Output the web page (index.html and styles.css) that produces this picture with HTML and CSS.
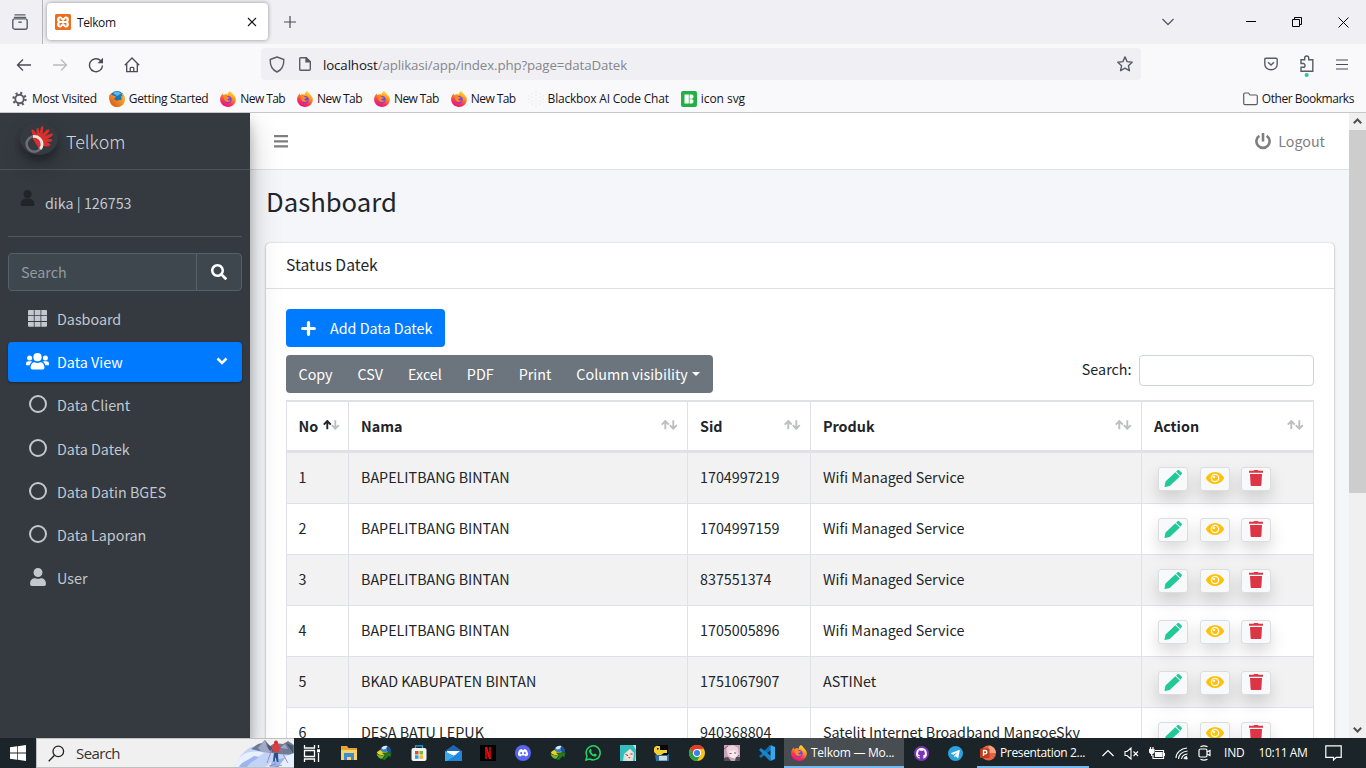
FILE: index.html
```html
<!DOCTYPE html>
<html lang="id">
<head>
<meta charset="utf-8">
<title>Telkom</title>
<link rel="stylesheet" href="styles.css">
</head>
<body>
<svg class="defs" width="0" height="0" aria-hidden="true">
  <defs>
    <linearGradient id="ffg" x1=".8" y1="0" x2=".3" y2="1"><stop offset="0" stop-color="#fff04a"/><stop offset=".35" stop-color="#ff9a1f"/><stop offset=".7" stop-color="#ff3750"/><stop offset="1" stop-color="#eb0a8c"/></linearGradient>
    <linearGradient id="ffo" x1="1" y1="0" x2="0" y2="1"><stop offset="0" stop-color="#ffd33a"/><stop offset=".5" stop-color="#f08a1c"/><stop offset="1" stop-color="#d9481b"/></linearGradient>
  </defs>
  <symbol id="firefox" viewBox="0 0 16 16"><path fill="url(#ffg)" d="M10 0c2 1.500 2.200 2.600 3.300 3.600 1.700 1.500 2.700 3.200 2.500 5.400C15.500 13 12.200 16 8 16S0 12.700.1 8.300C.2 5.800 1.200 4.100 2.600 2.200l.5 2C4.500 3 6.300 3.100 7.800 3.700 7.500 2 8.800.9 10 0z"/><circle cx="8" cy="8.600" r="3.700" fill="#7542e5"/><path fill="#ff8a22" d="M3.400 5.200c1.700-1 3.300-.3 4.600.8l2 .4c-.7 1.300-2.300 1-2.700 2 .6 1.500 2.400 1.400 3.500.7-.8 2.500-5.300 2.600-6.500-.3-.5-1.200-.6-2.400-.9-3.600z"/></symbol>
  <symbol id="oldfox" viewBox="0 0 16 16"><circle cx="8" cy="7.500" r="7.500" fill="#2173b5"/><path fill="#5bbbe8" d="M4 2c3-2 6-1.500 8 .5L8 5z"/><path fill="url(#ffo)" d="M.2 4.500C1 3.500 1.500 3 2 2.500c.3 1 .7 1.500 1.500 1.800L7 5.500 5.200 7.800c.6 2 3.300 2.700 5 1.200l1.800.2c1-1.500.6-3.200-.4-4.500 1 .2 1.600.8 2 1.500-.1-1.700-.5-3-1.500-4.200 2.600 1.400 3.900 4 3.900 6.400 0 4.300-3.600 7.600-8 7.600S-.2 12.500.2 4.500z"/></symbol>
  <symbol id="search" viewBox="0 0 512 512"><path fill="currentColor" d="M505 442.700L405.300 343c-4.500-4.500-10.600-7-17-7H372c27.600-35.300 44-79.700 44-128C416 93.100 322.900 0 208 0S0 93.100 0 208s93.100 208 208 208c48.300 0 92.700-16.400 128-44v16.300c0 6.400 2.500 12.500 7 17l99.700 99.700c9.400 9.400 24.600 9.400 33.900 0l28.300-28.300c9.400-9.400 9.400-24.600.1-34zM208 336c-70.700 0-128-57.200-128-128s57.200-128 128-128 128 57.200 128 128-57.200 128-128 128z"/></symbol>
  <symbol id="user" viewBox="0 0 448 512"><path fill="currentColor" d="M224 256c70.700 0 128-57.300 128-128S294.700 0 224 0 96 57.300 96 128s57.300 128 128 128zm89.600 32h-16.700c-22.200 10.200-46.900 16-72.900 16s-50.600-5.800-72.900-16h-16.700C60.200 288 0 348.200 0 422.400V464c0 26.500 21.500 48 48 48h352c26.500 0 48-21.500 48-48v-41.600c0-74.200-60.200-134.400-134.400-134.400z"/></symbol>
  <symbol id="users" viewBox="0 0 23 17"><g fill="currentColor"><circle cx="11.500" cy="4.200" r="4.100"/><circle cx="3.600" cy="5" r="2.500"/><circle cx="19.400" cy="5" r="2.500"/><path d="M4.600 14.600c0-3.400 1.700-5.300 4-5.300 1.900.9 3.900.9 5.800 0 2.300 0 4 1.900 4 5.300 0 1.200-.6 2-1.700 2H6.300c-1.100 0-1.700-.8-1.700-2z"/><path d="M0 10.600C0 9 1 8.200 2.400 8.200h2.500c.6 0 1 .2 1.400.5-1.600 1-2.400 2-2.600 3.600H.9c-.6 0-.9-.4-.9-.9zM23 10.600c0-1.600-1-2.400-2.400-2.400h-2.500c-.6 0-1 .2-1.400.5 1.600 1 2.400 2 2.600 3.600h2.800c.6 0 .9-.4.9-.9z"/></g></symbol>
  <symbol id="grid" viewBox="0 0 19 17"><path fill="currentColor" d="M1 0h4.800v4.900H0V1a1 1 0 0 1 1-1zM6.600 0h5.900v4.900H6.600zM13.300 0H18a1 1 0 0 1 1 1v3.900h-5.700zM0 5.800h5.800v5.200H0zM6.600 5.800h5.900v5.200H6.600zM13.300 5.800H19v5.200h-5.700zM0 11.900h5.800v4.900H1a1 1 0 0 1-1-1zM6.600 11.900h5.900v4.900H6.600zM13.300 11.900H19v3.900a1 1 0 0 1-1 1h-4.700z"/></symbol>
  <symbol id="ring" viewBox="0 0 18 18"><circle cx="9" cy="9" r="8" fill="none" stroke="currentColor" stroke-width="2"/></symbol>
  <symbol id="sort" viewBox="0 0 17 10"><g fill="none" stroke-width="1.900"><path class="up" d="M4.300 9.300V1M.8 4.600L4.300 1l3.500 3.600"/><path class="down" d="M12.300.3v8.400M8.800 5.100l3.500 3.600 3.500-3.600"/></g></symbol>
  <symbol id="pencil" viewBox="0 0 18 17"><g fill="#20c997"><path d="M11.300 2.200L15.800 6.500 5.700 15.900 1 16.900Q.4 17 .5 16.400L1.500 11.500zM12.100 1.500L13.600.2q.8-.6 1.500 0l2.500 2.400q.7.700 0 1.500L16.500 5.700z"/></g></symbol>
  <symbol id="eye" viewBox="0 0 18 12"><path fill="#ffc107" d="M9 0c3.800 0 7 2.200 8.800 5.300.2.400.2 1 0 1.400C16 9.800 12.800 12 9 12S2 9.800.2 6.700a1.500 1.500 0 0 1 0-1.400C2 2.200 5.200 0 9 0z"/><circle cx="9" cy="6" r="3.700" fill="none" stroke="#f8f9fa" stroke-width="1.300"/><circle cx="7.900" cy="5" r="1.300" fill="#f8f9fa"/></symbol>
  <symbol id="trash" viewBox="0 0 14 16"><path fill="#dc3545" d="M4.500.7L5.200 0h3.600l.7.700H14v2H0v-2zM1 4h12l-.6 10.700c0 .8-.6 1.300-1.400 1.300H3c-.8 0-1.400-.5-1.400-1.300z"/></symbol>
  <symbol id="idm" viewBox="0 0 16 16"><circle cx="9.500" cy="6" r="5.300" fill="#3c7fc4"/><path fill="#d8e9f5" d="M5.500 3c1.500-2 4-2.700 6-2L9.500 4 7 4.500z"/><path fill="#1d4f9a" d="M11 1.500c3 .8 4.500 4 3.700 7L11 6z"/><path fill="#e9d224" d="M4.500 5c2 2.500 4 2.500 7 1.500l-1 3.500C5 11 1.500 9.500.8 7.500 2 6 3.500 5.300 4.500 5z"/><path fill="#6fb92c" d="M.6 8.500c2 2 5 2.200 8 1.800l-2 3.500c-3 .2-5.500-2-6-5.300z"/><path fill="#257a1c" stroke="#123d10" stroke-width=".5" d="M6.500 8l9-.5-1 5-1.900-1.200-3.800 3.900-2.600-.8 2.900-3.900z"/></symbol>
</svg>

<div class="window">
  <header class="tabs">
    <div class="view-btn"><svg width="16" height="16" viewBox="0 0 16 16" fill="none" stroke="#5b5b66" stroke-width="1.400"><path d="M2.500.900h11M1.900 3.400h12.200"/><rect x=".8" y="4.900" width="14.400" height="10.300" rx="2"/><path d="M6.300 8.200h3.500"/></svg></div>
    <div class="tab">
      <svg width="16" height="16" viewBox="0 0 16 16"><rect width="16" height="16" rx="1.500" fill="#ed6d1c"/><path fill="#fff" d="M4.800 2.500c1.400 0 2.200.6 2.600 1.500h1.200c.4-.9 1.200-1.500 2.600-1.500 2.600 0 3.700 3.300 1.800 5.500 1.900 2.200.8 5.500-1.800 5.500-1.400 0-2.200-.6-2.600-1.500H7.400c-.4.900-1.200 1.500-2.600 1.500-2.600 0-3.700-3.300-1.800-5.500-1.900-2.200-.8-5.500 1.800-5.500z"/><path fill="none" stroke="#ed6d1c" stroke-width="1.300" stroke-linecap="round" d="M5.200 5v1.300h1.600M10.800 5v1.300H9.200M5.200 11V9.700h1.600M10.800 11V9.700H9.200"/></svg>
      <span class="tab-title">Telkom</span>
      <svg class="tab-close" width="10" height="10" viewBox="0 0 10 10" stroke="#15141a" stroke-width="1.100"><path d="M1 1l8 8M9 1L1 9"/></svg>
    </div>
    <svg class="tab-new" width="12" height="12" viewBox="0 0 12 12" stroke="#4b4b55" stroke-width="1.200"><path d="M6 0v12M0 6h12"/></svg>
    <div class="win-btns">
      <svg width="14" height="10" viewBox="0 0 14 10" fill="none" stroke="#5b5b66" stroke-width="1.300"><path d="M1.500 2L7 7.500 12.500 2"/></svg>
      <svg width="10" height="10" viewBox="0 0 10 10" stroke="#000" stroke-width="1"><path d="M0 4.500h10"/></svg>
      <svg width="10" height="10" viewBox="0 0 10 10" fill="none" stroke="#000"><path d="M.5 2.500h7v7h-7zM2.500 2.500v-2h7v7h-2"/></svg>
      <svg width="11" height="11" viewBox="0 0 11 11" stroke="#000"><path d="M.5.500l10 10M10.500.500l-10 10"/></svg>
    </div>
  </header>

  <div class="toolbar">
    <div class="nav-btns">
      <svg width="16" height="16" viewBox="0 0 16 16" fill="none" stroke="#4b4b55" stroke-width="1.300"><path d="M15 8H1.500M7 2.500L1.500 8 7 13.500"/></svg>
      <svg width="16" height="16" viewBox="0 0 16 16" fill="none" stroke="#bababf" stroke-width="1.300"><path d="M1 8h13.500M9 2.500L14.500 8 9 13.500"/></svg>
      <svg width="16" height="16" viewBox="0 0 16 16" fill="none" stroke="#4b4b55" stroke-width="1.400"><path d="M14.500 8.500A6.500 6.500 0 1 1 12.800 3.800"/><path d="M15 .8v5.500H9.500z" fill="#4b4b55" stroke="none"/></svg>
      <svg width="16" height="16" viewBox="0 0 16 16" fill="none" stroke="#4b4b55" stroke-width="1.300"><path d="M.8 8.200L8 1l7.200 7.200M2.700 6.700v8h10.600v-8M6.200 14.500v-3.200q0-1 1-1h1.600q1 0 1 1v3.200"/></svg>
    </div>
    <div class="url">
      <svg width="16" height="17" viewBox="0 0 16 17" fill="none" stroke="#5b5b66" stroke-width="1.400"><path d="M8 1L14.800 3.500C15 9.500 12.500 14 8 16 3.500 14 1 9.500 1.200 3.500z" stroke-linejoin="round"/></svg>
      <svg class="doc" width="12" height="14" viewBox="0 0 12 14" fill="none" stroke="#5b5b66" stroke-width="1.400"><path d="M1.700.700h5.500l4.100 4.100v7.500q0 1-1 1H1.700q-1 0-1-1V1.700q0-1 1-1z"/><path fill="#5b5b66" d="M7 .700v4.200h4.200z"/></svg>
      <span class="url-text"><b>localhost</b>/aplikasi/app/index.php?page=dataDatek</span>
      <svg class="star" width="16" height="16" viewBox="0 0 16 16" fill="none" stroke="#5b5b66" stroke-width="1.400" stroke-linejoin="round"><path d="M8 .9l2.100 4.700 5.100.6-3.800 3.500 1 5L8 12.200l-4.400 2.500 1-5L.8 6.200l5.100-.6z"/></svg>
    </div>
    <div class="tool-btns">
      <svg width="14" height="14" viewBox="0 0 14 14" fill="none" stroke="#5b5b66" stroke-width="1.400"><path d="M2 1.200h10q1.200 0 1.200 1.200V7c0 3.500-2.800 5.700-6.200 5.700S.8 10.500.8 7V2.400Q.8 1.200 2 1.200z"/><path d="M4 5.200l3 2.900 3-2.900"/></svg>
      <svg class="ext" width="14" height="22" viewBox="0 0 14 22" fill="none" stroke="#5b5b66" stroke-width="1.400"><path d="M1 8V4.800h3.700V3c0-2.600 4-2.600 4 0v1.800h4.100v11.500H1v-4h2.200c2.400 0 2.400-3.800 0-3.800H1z"/><circle cx="6.700" cy="20" r="2" fill="#2ac3a2" stroke="none"/></svg>
      <svg class="burger" width="12" height="11" viewBox="0 0 12 11" stroke="#4b4b55" stroke-width="1.200"><path d="M0 1h12M0 5.500h12M0 10h12"/></svg>
    </div>
  </div>

  <nav class="bookmarks">
    <a class="bm bm-visited"><svg width="15" height="16" viewBox="0 0 16 16" fill="none" stroke="#5b5b66"><circle cx="8" cy="8" r="4.500" stroke-width="2"/><circle cx="8" cy="8" r="6.400" stroke-width="2.500" stroke-dasharray="2.200 2.826"/></svg>Most Visited</a>
    <a class="bm bm-start"><svg width="16" height="16"><use href="#oldfox"/></svg>Getting Started</a>
    <a class="bm bm-new"><svg width="16" height="16"><use href="#firefox"/></svg>New Tab</a>
    <a class="bm bm-new"><svg width="16" height="16"><use href="#firefox"/></svg>New Tab</a>
    <a class="bm bm-new"><svg width="16" height="16"><use href="#firefox"/></svg>New Tab</a>
    <a class="bm bm-new"><svg width="16" height="16"><use href="#firefox"/></svg>New Tab</a>
    <a class="bm bm-chat"><svg width="16" height="16" viewBox="0 0 16 16" fill="none" stroke="#f0f0f2" stroke-width="2" stroke-dasharray="1.500 2"><path d="M8 0v16M4 2v12M12 2v12M1 4v8M15 4v8"/></svg>Blackbox AI Code Chat</a>
    <a class="bm bm-svg"><svg width="16" height="16" viewBox="0 0 16 16"><rect width="16" height="16" rx="2" fill="#1fb141"/><path fill="#fff" d="M3.500 3.500h4.300v9H3.500zM8.500 3.500h2.700l1.300 1.300v1.700l-1.300 1.300H8.500zM8.500 8.300h2.700l1.300 1.300v1.600l-1.300 1.300H8.500z"/></svg>icon svg</a>
    <a class="bm bm-other"><svg width="15" height="14" viewBox="0 0 15 14" fill="none" stroke="#5b5b66" stroke-width="1.200"><path d="M2 1h3.500l1.500 2h6q1.300 0 1.300 1.300v7q0 1.300-1.300 1.300H2Q.7 12.600.7 11.300v-9Q.7 1 2 1z"/></svg>Other Bookmarks</a>
  </nav>

  <main class="page">
    <aside class="sidebar">
      <div class="brand">
        <div class="logo"><svg width="30" height="28" viewBox="0 0 30 28"><circle cx="10.300" cy="19" r="7.700" fill="none" stroke="#6c6e73" stroke-width="2.600"/><path fill="#d9302c" d="M9 10C7.500 7 6.800 4.700 8.300 4.500c1.600-.2 3.200 3 4.500 5.300C12.500 6 12 3.500 13.500 3c1.600-.2 1.700 3 2.200 5.500C16.500 5 16.500 1 18.300 1.200c1.800.3.700 4.500.3 8 2-2.500 5-6 6.500-4.500 1.200 1.300-2 4-3.700 6.500 2.700-1.500 6-3.500 7.300-2.200 1.200 1.700-3.200 3.500-5.700 5.200 2.200-.3 5.500-.2 5.300 1.300-.3 1.500-3.500 1.200-5.800 1.700 1.800.8 4.500 1.300 4 2.900-.5 1.700-5 1.400-8 .9L15 24 8.500 13z"/><path fill="none" stroke="#eee6e6" stroke-width="2.800" d="M9 11.600c5-1 9.500 3.300 9 8.500-.2 1.500-.8 3-1.800 4"/></svg></div>
        <span>Telkom</span>
      </div>
      <div class="user-panel"><svg width="15" height="16" viewBox="0 0 15 16"><circle cx="7.500" cy="4" r="4" fill="#212529"/><path fill="#212529" d="M.5 14c0-3 2-5.500 7-5.500s7 2.500 7 5.500c0 1.500-.5 2-1.500 2H2C1 16 .5 15.500.5 14z"/></svg><span>dika | 126753</span></div>
      <div class="side-search"><span>Search</span><i><svg width="16" height="16"><use href="#search"/></svg></i></div>
      <ul class="menu">
        <li><i><svg width="19" height="17"><use href="#grid"/></svg></i>Dasboard</li>
        <li class="active"><i><svg width="23" height="17"><use href="#users"/></svg></i>Data View<svg class="caret" width="12" height="8" viewBox="0 0 12 8" fill="none" stroke="#fff" stroke-width="2.500"><path d="M1.500 1.500L6 6l4.500-4.500"/></svg></li>
        <li><i><svg width="18" height="18"><use href="#ring"/></svg></i>Data Client</li>
        <li><i><svg width="18" height="18"><use href="#ring"/></svg></i>Data Datek</li>
        <li><i><svg width="18" height="18"><use href="#ring"/></svg></i>Data Datin BGES</li>
        <li><i><svg width="18" height="18"><use href="#ring"/></svg></i>Data Laporan</li>
        <li><i><svg width="16" height="18"><use href="#user"/></svg></i>User</li>
      </ul>
    </aside>

    <section class="content">
      <div class="navbar">
        <svg width="14" height="13" viewBox="0 0 14 13" fill="#7f7f7f"><path d="M0 0h14v2.200H0zM0 5.200h14v2.200H0zM0 10.300h14v2.200H0z"/></svg>
        <div class="logout"><svg width="16" height="17" viewBox="0 0 16 17" fill="none" stroke="#7f7f7f" stroke-width="2.600"><path d="M4.300 2.800a6.600 6.600 0 1 0 7.400 0M8 0v8.500"/></svg>Logout</div>
      </div>
      <h1>Dashboard</h1>
      <div class="card">
        <div class="card-head">Status Datek</div>
        <div class="card-body">
          <button class="btn-add"><svg width="15" height="15" viewBox="0 0 15 15" stroke="#fff" stroke-width="3.200" stroke-linecap="round"><path d="M7.500 1.700v11.600M1.700 7.500h11.600"/></svg>Add Data Datek</button>
          <div class="tools">
            <div class="btn-group"><span>Copy</span><span>CSV</span><span>Excel</span><span>PDF</span><span>Print</span><span>Column visibility<b></b></span></div>
            <label>Search:<input type="text"></label>
          </div>
          <table>
            <colgroup><col class="c-no"><col class="c-nama"><col class="c-sid"><col class="c-produk"><col class="c-action"></colgroup>
            <thead><tr>
              <th><div class="th asc">No<svg width="17" height="10"><use href="#sort"/></svg></div></th>
              <th><div class="th">Nama<svg width="17" height="10"><use href="#sort"/></svg></div></th>
              <th><div class="th">Sid<svg width="17" height="10"><use href="#sort"/></svg></div></th>
              <th><div class="th">Produk<svg width="17" height="10"><use href="#sort"/></svg></div></th>
              <th><div class="th">Action<svg width="17" height="10"><use href="#sort"/></svg></div></th>
            </tr></thead>
            <tbody>
              <tr><td>1</td><td>BAPELITBANG BINTAN</td><td>1704997219</td><td>Wifi Managed Service</td><td><div class="acts"><i><svg width="18" height="17"><use href="#pencil"/></svg></i><i><svg width="18" height="12"><use href="#eye"/></svg></i><i><svg width="14" height="16"><use href="#trash"/></svg></i></div></td></tr>
              <tr><td>2</td><td>BAPELITBANG BINTAN</td><td>1704997159</td><td>Wifi Managed Service</td><td><div class="acts"><i><svg width="18" height="17"><use href="#pencil"/></svg></i><i><svg width="18" height="12"><use href="#eye"/></svg></i><i><svg width="14" height="16"><use href="#trash"/></svg></i></div></td></tr>
              <tr><td>3</td><td>BAPELITBANG BINTAN</td><td>837551374</td><td>Wifi Managed Service</td><td><div class="acts"><i><svg width="18" height="17"><use href="#pencil"/></svg></i><i><svg width="18" height="12"><use href="#eye"/></svg></i><i><svg width="14" height="16"><use href="#trash"/></svg></i></div></td></tr>
              <tr><td>4</td><td>BAPELITBANG BINTAN</td><td>1705005896</td><td>Wifi Managed Service</td><td><div class="acts"><i><svg width="18" height="17"><use href="#pencil"/></svg></i><i><svg width="18" height="12"><use href="#eye"/></svg></i><i><svg width="14" height="16"><use href="#trash"/></svg></i></div></td></tr>
              <tr><td>5</td><td>BKAD KABUPATEN BINTAN</td><td>1751067907</td><td>ASTINet</td><td><div class="acts"><i><svg width="18" height="17"><use href="#pencil"/></svg></i><i><svg width="18" height="12"><use href="#eye"/></svg></i><i><svg width="14" height="16"><use href="#trash"/></svg></i></div></td></tr>
              <tr><td>6</td><td>DESA BATU LEPUK</td><td>940368804</td><td>Satelit Internet Broadband MangoeSky</td><td><div class="acts"><i><svg width="18" height="17"><use href="#pencil"/></svg></i><i><svg width="18" height="12"><use href="#eye"/></svg></i><i><svg width="14" height="16"><use href="#trash"/></svg></i></div></td></tr>
            </tbody>
          </table>
        </div>
      </div>
    </section>

    <div class="scrollbar">
      <svg width="17" height="17" viewBox="0 0 17 17" fill="none" stroke="#505050" stroke-width="2"><path d="M4.800 10.200l3.700-3.700 3.700 3.700"/></svg>
      <div class="track"><div class="thumb"></div></div>
      <svg width="17" height="17" viewBox="0 0 17 17" fill="none" stroke="#505050" stroke-width="2"><path d="M4.800 6.800l3.700 3.700 3.700-3.700"/></svg>
    </div>
  </main>

  <footer class="taskbar">
    <div class="start"><svg width="16" height="16" viewBox="0 0 16 16" fill="#fff"><path d="M0 2.300l7-1v6.300H0zM7.700 1.200L16 0v7.600H7.700zM0 8.400h7v6.300l-7-1zM7.700 8.400H16V16l-8.300-1.200z"/></svg></div>
    <div class="win-search">
      <svg width="17" height="17" viewBox="0 0 17 17" fill="none" stroke="#222" stroke-width="1.300"><circle cx="10.300" cy="6.400" r="5.300"/><path d="M6.500 10.300L.7 16.200"/></svg>
      <span>Search</span>
      <svg class="ski" width="60" height="28" viewBox="0 0 60 28"><path fill="#c3d3f6" d="M1 28C4 18 12 9 20 7l40 3v18z"/><path fill="#6f7a95" d="M17 10L24 5l4-1 3-3 5 6 5-3 8 1 5-3 6 4v10l-15-1-20-3z"/><path fill="#9fa9c6" d="M24 9l7-8 2 7 5 6-10-1zM46 9l5-4 3 5z"/><path fill="#4d5873" d="M33 5l5 3 2 5-5-2zM52 4l7 3v7z"/><path fill="#e8f0ff" d="M10 15c7-3 14-3 20-1l-6 4c-9 3-13 6-15 10H32l5-5 23-9v14H1C2 23 5 18 10 15z"/><path fill="#9db5ec" d="M5 28c2-5 8-6 15-11l5 1c-3 3-9 5-12 10zM38 22l14-4-8 10h-8z"/><path fill="#dc3d3e" d="M39 5l5-.5 3 5.500-2 1-1 3-4-1-2-3z"/><circle cx="42" cy="3.500" r="2" fill="#d32d38"/><path fill="#22548a" d="M40 14l4 0 .5 9-1.500 0-1.500-5-1 5-1.500-1z"/><path fill="none" stroke="#8b7bb7" stroke-width=".8" d="M38 10l-5 14M46 10l8 14M35 27l7-2M41 28l7-2"/></svg>
    </div>
    <div class="taskview"><svg width="18" height="17" viewBox="0 0 18 17" fill="none" stroke="#fff" stroke-width="1.300"><path d="M1.500 0v3h10V0M1.500 17v-3h10v3M1.500 5.500h10v6h-10zM15.500 0v3M15.500 8v9"/><path d="M14 5.800h3" stroke-width="3"/></svg></div>
    <div class="apps">
      <i><svg width="16" height="16" viewBox="0 0 16 16"><path fill="#e8a33a" d="M0 1h6l1.500 2H16v5H0z"/><path fill="#fbd163" d="M0 5h16v10H0z"/><path fill="#3c8bd9" d="M3 8h10v7h-3v-3H6v3H3z"/></svg></i>
      <i><svg width="16" height="16"><use href="#idm"/></svg></i>
      <i><svg width="16" height="16" viewBox="0 0 16 16"><path fill="none" stroke="#2aa6e8" stroke-width="1.300" d="M4.500 4V.8h7V4"/><rect x=".5" y="3" width="15" height="13" rx="2" fill="#f3f3f3"/><path fill="#e8492c" d="M4 6h3.500v3.500H4z"/><path fill="#7eb82e" d="M8.500 6H12v3.500H8.500z"/><path fill="#22a0e4" d="M4 10.300h3.500v3.500H4z"/><path fill="#f6b81b" d="M8.500 10.300H12v3.500H8.500z"/></svg></i>
      <i><svg width="17" height="16" viewBox="0 0 17 16"><path fill="#1d66b5" d="M0 6L8.500 0 17 6v4H0z"/><path fill="#fff" d="M2 6h13l-6 5-7-3z"/><path fill="#37a9ee" d="M0 6l8.500 5L17 6v10H0z"/><path fill="#2186d8" d="M17 6v10H2z"/></svg></i>
      <i><svg width="16" height="16" viewBox="0 0 16 16"><rect width="16" height="16" fill="#000"/><path fill="#b20710" d="M5 2h2v12H5zM9 2h2v12H9z"/><path fill="#e50914" d="M5 2h2.200l3.800 12H8.900z"/></svg></i>
      <i><svg width="16" height="16" viewBox="0 0 16 16"><circle cx="8" cy="8" r="8" fill="#5865f2"/><path fill="#fff" d="M4.300 5c1-.7 1.700-.9 2.300-1l.4.700h2l.4-.7c.7.100 1.400.4 2.200 1 1.200 1.900 1.600 3.500 1.400 5.300-.9.700-1.700 1-2.600 1.200l-.6-1H6.200l-.6 1c-.9-.2-1.700-.5-2.600-1.200C2.900 8.400 3.300 6.700 4.300 5z"/><ellipse cx="6.200" cy="8.100" rx="1" ry="1.200" fill="#5865f2"/><ellipse cx="9.800" cy="8.100" rx="1" ry="1.200" fill="#5865f2"/></svg></i>
      <i><svg width="16" height="16"><use href="#idm"/></svg></i>
      <i><svg width="16" height="16" viewBox="0 0 16 16"><path fill="none" stroke="#25d366" stroke-width="1.500" d="M1 15l1-3.800A7 7 0 1 1 4.800 14z"/><path fill="#25d366" d="M5 4.200c.8-.6 1.200 0 1.700 1.500.1.500-.7.800-.6 1.200.6 1.200 1.500 2 2.700 2.500.4.100.8-1 1.200-.9l1.700.9c.2 1.500-1.200 2.200-2.200 2C6.500 11 4.200 8 4 6.200c0-.8.300-1.500 1-2z"/></svg></i>
      <i><svg width="16" height="16" viewBox="0 0 16 16"><rect width="16" height="16" fill="#b8e9e6"/><path fill="#35bdbb" d="M0 0h13l3 5-1 11h-2l1-8-4-4-6 5-1 7H0z"/><path fill="#f8ded3" d="M4.500 9l5.500-5 3.500 4-.5 5-3.500 3-4-2z"/><path stroke="#32565c" d="M5.500 9.500l2.500 1M10.500 9h2"/><path fill="#db565b" d="M8 12h2.500l-1 1.800z"/></svg></i>
      <i><svg width="16" height="16" viewBox="0 0 16 16"><path fill="#2d6e9e" d="M1 10l14-1v7H2z"/><path fill="#c8dce8" d="M5 11h8v4.500H5z"/><path fill="#060606" d="M4 0h10v10H7z"/><path fill="#f3ce32" d="M0 3l2-2h4v4h4v3l-3 2H3L0 7zM9.500 5H13v3h-3z"/><path fill="#111" d="M3 3h1.500v1.500H3z"/></svg></i>
      <i><svg width="16" height="16" viewBox="0 0 16 16"><circle cx="8" cy="8" r="8" fill="#fbc116"/><path fill="#e33b2e" d="M1.100 4A8 8 0 0 1 14.900 4H8L4.500 10z"/><path fill="#26a148" d="M1.100 4A8 8 0 0 0 8 16l3.500-6H4.500z"/><circle cx="8" cy="8" r="4" fill="#fff"/><circle cx="8" cy="8" r="3" fill="#3b7ded"/></svg></i>
      <i><svg width="16" height="16" viewBox="0 0 16 16"><rect width="16" height="16" fill="#c6a5b8"/><path fill="#edd1dc" d="M2 2l7-2 5 3 1 8-4 3-7-3z"/><path fill="#f8ece9" d="M5 6l6-1 2 4-2 4-5-1z"/><path stroke="#7b547c" d="M5.500 8.500h2M10 8h2M1 12l4 3M12 14l3-4M0 4l4-3"/><path fill="#54485b" d="M0 13l4-1 3 4H0zM12 12h4v4h-5z"/></svg></i>
      <i><svg width="16" height="16" viewBox="0 0 16 16"><path fill="#0f70b8" d="M11 0l1 5-10 8-2-1.700z"/><path fill="#1686cf" d="M2 3l10 8-1 5L0 5z"/><path fill="#32a9f0" d="M11.500 0L16 2v12l-4.500 2z"/></svg></i>
    </div>
    <div class="task active-task"><svg width="16" height="16"><use href="#firefox"/></svg><span>Telkom — Mo...</span></div>
    <div class="apps pair">
      <i><svg width="15" height="15" viewBox="0 0 16 16"><circle cx="8" cy="8" r="8" fill="#7b35b4"/><path fill="#fff" d="M8 2.200a5.900 5.900 0 0 0-2 11.400v-2c-1.500.3-2-.7-2.500-1.300 1.100-.2 1.300.9 2.500.5l.4-.7C4.200 9.700 3.600 7.500 5 6l.1-1.600L6.700 5h2.600l1.600-.6L11 6c1.400 1.500.8 3.700-1.400 4.100l.4.900v2.600A5.900 5.900 0 0 0 8 2.200z"/></svg></i>
      <i><svg width="15" height="15" viewBox="0 0 16 16"><circle cx="8" cy="8" r="8" fill="#2ba3df"/><path fill="#fff" d="M2.900 7.800l9-3.600c.5-.1.800.1.600.8l-1.400 7.200c-.2.600-.6.600-1 .3L7.800 10.800 6.600 12l.1-1.900 3.700-3.400L5.500 9.400z"/></svg></i>
    </div>
    <div class="task"><svg width="16" height="16" viewBox="0 0 16 16"><circle cx="8.500" cy="8" r="7.500" fill="#e2633f"/><path fill="#f5a184" d="M8.500.500A7.500 7.500 0 0 1 16 8H8.500z"/><rect y="3.500" width="9.500" height="9.500" rx="1" fill="#c03a1c"/><path fill="none" stroke="#fff" stroke-width="1.300" d="M3.500 11V5.500h1.600c2.400 0 2.400 3.300 0 3.300H3.500"/></svg><span>Presentation 2...</span></div>
    <div class="tray">
      <svg width="12" height="8" viewBox="0 0 12 8" fill="none" stroke="#fff" stroke-width="1.200"><path d="M.5 7L6 1.500 11.500 7"/></svg>
      <svg width="15" height="13" viewBox="0 0 15 13" fill="none" stroke="#fff" stroke-width="1.100"><path d="M1 4.500h2l4-3.500v11L3 8.500H1zM9.500 4.500l4.500 4.500M14 4.500L9.500 9"/></svg>
      <svg width="16" height="13" viewBox="0 0 16 13" fill="none" stroke="#fff" stroke-width="1.200"><path d="M6 3.500h8.500v8H4V8M15.500 6v3"/><path fill="#fff" d="M6.500 5.500H13v4H6.500zM.5 2.500H5V5L3.800 6.500H1.700L.5 5z"/><path d="M1.500 0v2.500M4 0v2.500M2.700 6.500V9"/></svg>
      <svg width="13" height="13" viewBox="0 0 13 13" fill="none" stroke="#fff" stroke-width="1.100"><path d="M1 11C1 6 5.500 1.500 12 1M3.500 12c0-4 3.500-7.500 9-8M6.500 12c.5-2.700 2.500-4.700 6-5M9 12c.4-1.500 1.500-2.500 3-2.700"/><circle cx="11.300" cy="11.300" r="1.300" fill="#fff" stroke="none"/></svg>
      <svg width="13" height="16" viewBox="0 0 13 16" fill="none" stroke="#fff" stroke-width="1.200"><rect x="1" y="4" width="8" height="8" rx="1.500"/><path d="M9 7l3-1.500v5L9 9M2.500 1.800Q6 0 9.500 1.800M2.500 14.200Q6 16 9.500 14.200"/></svg>
      <span class="lang">IND</span>
      <span class="clock">10:11 AM</span>
      <svg class="note" width="17" height="16" viewBox="0 0 17 16" fill="none" stroke="#fff" stroke-width="1.200"><path d="M.8.800h15.400v11.500h-5L8.500 15v-2.700H.8z"/></svg>
    </div>
  </footer>
</div>
</body>
</html>
```
FILE: styles.css
```css
* { box-sizing: border-box; }
body { margin: 0; overflow: hidden; }
svg { display: block; flex: none; }
.defs { position: absolute; }

.window {
  width: 1366px;
  height: 768px;
  display: flex;
  flex-direction: column;
  overflow: hidden;
  font: 12px/16px "Open Sans", "Noto Sans", sans-serif;
  color: #15141a;
}

/* Browser tabs */
.tabs { height: 44px; background: #f0f0f4; display: flex; align-items: flex-start; }
.view-btn { width: 43px; height: 44px; padding: 14px 0 0 12px; border-right: 1px solid #b5b5ba; }
.tab {
  width: 221px; height: 37px; margin: 3px 0 0 4px; padding: 1px 11px 0 8px;
  display: flex; align-items: center;
  background: #fff; border-radius: 4px; box-shadow: 0 0 4px rgba(0, 0, 0, .4);
}
.tab-title { margin: 1px 0 0 6px; letter-spacing: -.4px; }
.tab-close { margin-left: auto; }
.tab-new { margin: 16px 0 0 16px; }
.win-btns { margin-left: auto; height: 44px; padding-right: 17px; display: flex; align-items: center; }
.win-btns svg:nth-child(2) { margin-left: 71px; }
.win-btns svg:nth-child(3) { margin-left: 36px; }
.win-btns svg:nth-child(4) { margin-left: 36px; }

/* Address row */
.toolbar { height: 42px; background: #f9f9fb; display: flex; align-items: center; }
.nav-btns { width: 261px; padding-left: 16px; display: flex; gap: 20px; }
.url {
  width: 880px; height: 32px; margin-bottom: 2px; padding: 0 8px;
  background: #f0f0f4; border-radius: 4px; display: flex; align-items: center;
}
.doc { margin-left: 14px; }
.url-text { margin: 2px 0 0 12px; font-size: 13.300px; color: #86868b; letter-spacing: -.12px; }
.url-text b { font-weight: 400; color: #15141a; }
.star { margin-left: auto; }
.tool-btns { margin-left: auto; padding: 0 18px 2px 0; display: flex; align-items: center; gap: 22px; }
.ext { margin-top: 3px; }
.burger { margin-top: 0; }

/* Bookmarks */
.bookmarks {
  height: 27px; padding: 0 12px 1px; background: #f9f9fb; border-bottom: 1px solid #c7c7cb;
  display: flex; align-items: center; gap: 12px; letter-spacing: -.3px;
}
.bm { display: flex; align-items: center; gap: 4px; white-space: nowrap; }
.bm-visited { gap: 5px; }
.bm-start { letter-spacing: -.36px; }
.bm-new { letter-spacing: -.57px; }
.bm-chat { letter-spacing: -.2px; }
.bm-svg { letter-spacing: -.05px; }
.bm-other { margin-left: auto; letter-spacing: -.45px; }

/* Page */
.page {
  height: 625px; display: flex; background: #f4f6f9; overflow: hidden;
  font: 14.320px/24px "Noto Sans CJK SC", "Noto Sans CJK JP", sans-serif; color: #212529;
}
.sidebar {
  width: 250px; flex: none; background: #343a40; color: #c2c7d0; z-index: 2;
  box-shadow: 0 14px 28px rgba(0, 0, 0, .25), 0 10px 10px rgba(0, 0, 0, .22);
}
.brand {
  height: 57px; padding-left: 20px; display: flex; align-items: center;
  border-bottom: 1px solid #4b545c; font-size: 17.900px; font-weight: 300; color: rgba(255, 255, 255, .8);
}
.logo {
  width: 38px; height: 33px; margin: -5px 8px 0 0; padding: 3px 0 0 4px; border-radius: 50%;
  box-shadow: 0 10px 20px rgba(0, 0, 0, .19), 0 6px 6px rgba(0, 0, 0, .23);
}
.user-panel { height: 67px; margin: 0 8px; padding: 20px 12px 0; display: flex; gap: 10px; border-bottom: 1px solid #4f5962; }
.user-panel span { margin-top: 1px; }
.side-search {
  height: 38px; margin: 16px 8px 8px; display: flex; border: 1px solid #56606a; border-radius: 4px;
  background: #3f474e; color: #939ba2; line-height: 36px;
}
.side-search span { flex: 1; padding-left: 12px; }
.side-search i { width: 45px; display: flex; align-items: center; justify-content: center; border-left: 1px solid #56606a; color: #fff; }
.menu { margin: 0 8px; padding: 0; list-style: none; display: flex; flex-direction: column; gap: 3.200px; }
.menu li { height: 40px; padding: 0 14px 0 16px; display: flex; align-items: center; border-radius: 4px; }
.menu i { width: 27px; margin-right: 6px; display: flex; justify-content: center; margin-top: -2px; }
.menu .active { background: #007bff; color: #fff; box-shadow: 0 1px 3px rgba(0, 0, 0, .12), 0 1px 2px rgba(0, 0, 0, .24); }
.caret { margin: -3px 0 0 auto; }

.content { flex: 1; min-width: 0; }
.navbar {
  height: 57px; padding: 0 24px; background: #fff; border-bottom: 1px solid #dee2e6;
  display: flex; align-items: center; justify-content: space-between; color: #7f7f7f;
}
.logout { display: flex; align-items: center; gap: 7px; }
h1 { margin: 13px 16px 24px; font-size: 25.700px; line-height: 36px; font-weight: 400; }
.card {
  width: 1068px; height: 700px; margin-left: 16px; background: #fff; border-radius: 4px;
  box-shadow: 0 0 1px rgba(0, 0, 0, .3), 0 1px 3px rgba(0, 0, 0, .25);
}
.card-head { height: 46px; padding: 0 20px; line-height: 43px; font-size: 15.700px; border-bottom: 1px solid #dfdfdf; }
.card-body { padding: 20px; }
.btn-add {
  width: 159px; height: 38px; padding: 0 0 0 15px; border: 0; border-radius: 4px; background: #007bff;
  color: #fff; font: inherit; display: flex; align-items: center; gap: 14px; white-space: nowrap;
}
.tools { display: flex; justify-content: space-between; margin: 8px 0 7px; height: 38px; }
.btn-group { height: 38px; padding: 0 13.500px 0 12.500px; display: flex; gap: 25px; border-radius: 4px; background: #6c757d; color: #fff; line-height: 38px; }
.btn-group b { display: inline-block; margin-left: 4px; vertical-align: 4px; border: 4.500px solid transparent; border-top-color: #fff; border-bottom: 0; }
.tools label { display: flex; gap: 7.500px; height: 31px; line-height: 28px; }
.tools input { width: 175px; height: 31px; border: 1px solid #ced4da; border-radius: 4px; background: #fff; }

table { width: 1028px; table-layout: fixed; border-collapse: separate; border-spacing: 0; }
.c-no { width: 62px; }
.c-nama { width: 339px; }
.c-sid { width: 123px; }
.c-produk { width: 331px; }
.c-action { width: 173px; }
th, td { padding: 0 0 0 12px; border-left: 1px solid #dee2e6; text-align: left; white-space: nowrap; }
th:first-child, td:first-child { padding-left: 11.500px; }
th:last-child, td:last-child { border-right: 1px solid #dee2e6; }
th { height: 53px; border-top: 2px solid #dee2e6; border-bottom: 3px solid #dee2e6; font-weight: 700; }
td { height: 51px; padding-bottom: 2px; border-bottom: 1px solid #dee2e6; }
tbody tr:nth-child(odd) { background: #f2f2f2; }
.th { display: flex; align-items: center; justify-content: space-between; padding-right: 9px; stroke: #bdbebf; }
.th svg { margin-top: -3px; }
.asc { --up: #212529; padding-right: 8.500px; }
.up { stroke: var(--up, #bdbebf); }
.acts { display: flex; gap: 11.500px; padding: 3px 0 0 4px; }
.acts i {
  width: 30px; height: 24px; display: flex; align-items: center; justify-content: center; padding-bottom: 1px;
  background: #f8f9fa; border: 1px solid #ddd; border-radius: 3px; box-shadow: 0 8px 16px rgba(0, 0, 0, .15);
}

.scrollbar { width: 17px; background: #f0f0f0; display: flex; flex-direction: column; }
.track { flex: 1; }
.thumb { height: 363px; background: #cdcdcd; }

/* Taskbar */
.taskbar { height: 30px; background: #1b2428; color: #fff; display: flex; align-items: stretch; }
.start { width: 36px; display: flex; align-items: center; justify-content: center; }
.win-search {
  width: 258px; background: #f0f0f0; border: 1px solid #c0c0c0; border-width: 1px 0 1px 1px;
  display: flex; align-items: center; padding-left: 11px; color: #333; font-size: 15px;
}
.win-search span { margin-left: 11px; letter-spacing: -.6px; }
.ski { margin-left: auto; }
.taskview { width: 38px; padding-left: 9px; display: flex; align-items: center; }
.apps { width: 452px; display: flex; align-items: center; }
.apps i { flex: 1; display: flex; justify-content: center; }
.pair { width: 68px; margin-right: 5px; }
.task { width: 112px; padding: 2px 0 0 3px; display: flex; align-items: center; gap: 4px; border-bottom: 2px solid #76b9ed; white-space: nowrap; letter-spacing: -.35px; }
.active-task { width: 120px; padding-left: 7px; background: #474d51; letter-spacing: -.25px; }
.tray { flex: 1; padding-left: 13px; display: flex; align-items: center; gap: 10px; }
.lang { margin-left: 3px; letter-spacing: -.2px; }
.clock { margin-left: 4px; letter-spacing: -.4px; }
.note { margin-left: 8px; }
```
